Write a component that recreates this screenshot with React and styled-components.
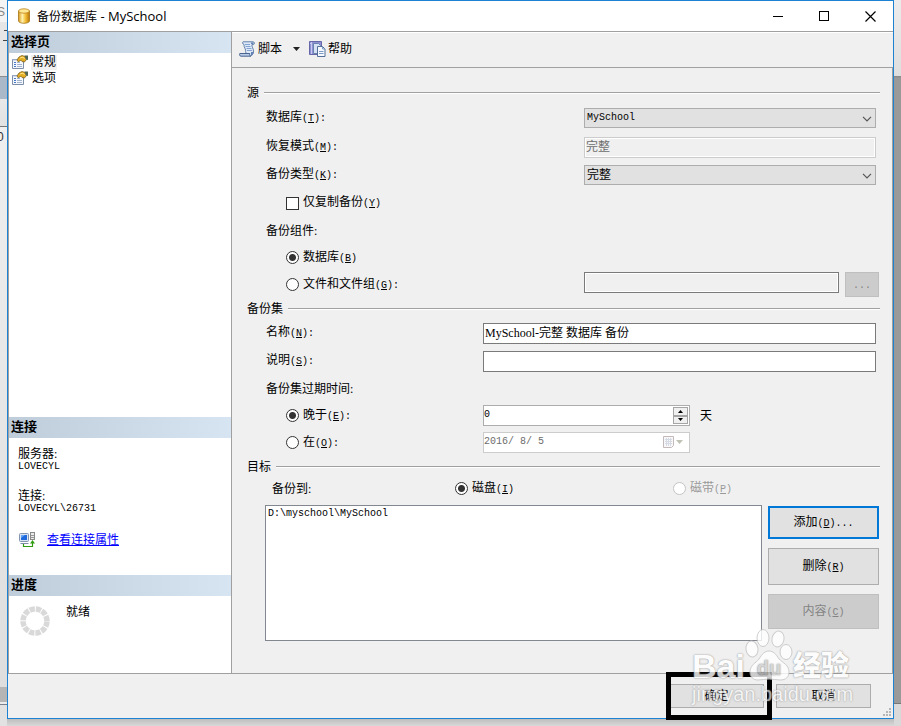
import React, { useState } from 'react'
import styled, { createGlobalStyle, css } from 'styled-components'

const GlobalStyle = createGlobalStyle`
  *, *::before, *::after {
    box-sizing: border-box;
  }
  body {
    margin: 0;
    background: #d6d6d6;
    color: #000;
    font-family: 'Liberation Serif', 'Noto Sans CJK SC', sans-serif;
    font-size: 12px;
    line-height: 16px;
  }
  button, input, select {
    font: inherit;
    color: inherit;
    margin: 0;
  }
`

const Key = ({ k, tail = '' }) => (
  <Latin>
    (<u>{k}</u>){tail}
  </Latin>
)

const App = () => {
  const [source, setSource] = useState('db')
  const [expire, setExpire] = useState('after')
  const [days, setDays] = useState('0')
  const [name, setName] = useState('MySchool-完整 数据库 备份')

  return (
    <Desktop>
      <GlobalStyle />
      <BehindLeft aria-hidden="true">
        <span>S</span>
        <span>0</span>
      </BehindLeft>
      <Window>
        <TitleBar>
          <DatabaseIcon />
          <Title>备份数据库<span> - MySchool</span></Title>
          <CaptionButton aria-label="最小化">
            <svg width="11" height="11" shapeRendering="crispEdges"><path d="M0 5.5h10" stroke="#000" /></svg>
          </CaptionButton>
          <CaptionButton aria-label="最大化">
            <svg width="11" height="11" shapeRendering="crispEdges"><path d="M.5 .5h9v9h-9z" fill="none" stroke="#000" /></svg>
          </CaptionButton>
          <CaptionButton aria-label="关闭">
            <svg width="11" height="11"><path d="M.5 .5l10 10M10.500 .5l-10 10" stroke="#000" strokeWidth="1.200" /></svg>
          </CaptionButton>
        </TitleBar>

        <Body>
          <Sidebar>
            <SideHeading>选择页</SideHeading>
            <PageList>
              <PageItem type="button" $active>
                <PageIcon />
                <span>常规</span>
              </PageItem>
              <PageItem type="button">
                <PageIcon />
                <span>选项</span>
              </PageItem>
            </PageList>
            <SideHeading>连接</SideHeading>
            <Connection>
              <dt>服务器:</dt>
              <dd>LOVECYL</dd>
              <dt>连接:</dt>
              <dd>LOVECYL\26731</dd>
            </Connection>
            <ConnectionLink>
              <ServerIcon />
              <a href="#properties">查看连接属性</a>
            </ConnectionLink>
            <SideHeading>进度</SideHeading>
            <Progress>
              <SpinnerIcon />
              <span>就绪</span>
            </Progress>
          </Sidebar>

          <Main>
            <Toolbar>
              <ToolButton type="button">
                <ScriptIcon />
                脚本
                <svg width="7" height="4"><path d="M0 0h7L3.500 4z" fill="#222" /></svg>
              </ToolButton>
              <ToolButton type="button">
                <HelpIcon />
                帮助
              </ToolButton>
            </Toolbar>

            <Form>
              <Legend>源</Legend>
              <Row $height={30}>
                <label htmlFor="database">数据库<Key k="T" tail=":" /></label>
                <SelectBox>
                  <select id="database" className="latin"><option>MySchool</option></select>
                  <Chevron />
                </SelectBox>
              </Row>
              <Row>
                <label htmlFor="recovery">恢复模式<Key k="M" tail=":" /></label>
                <TextInput id="recovery" value="完整" $tone="pale" disabled readOnly />
              </Row>
              <Row>
                <label htmlFor="type">备份类型<Key k="K" tail=":" /></label>
                <SelectBox>
                  <select id="type"><option>完整</option></select>
                  <Chevron />
                </SelectBox>
              </Row>
              <Row>
                <Option>
                  <input type="checkbox" />
                  <span>仅复制备份<Key k="Y" /></span>
                </Option>
              </Row>
              <Row $height={27}>备份组件:</Row>
              <Row $height={27}>
                <Option>
                  <input type="radio" name="source" checked={source === 'db'} onChange={() => setSource('db')} />
                  <span>数据库<Key k="B" /></span>
                </Option>
              </Row>
              <Row $height={27} $wide>
                <Option>
                  <input type="radio" name="source" checked={source === 'files'} onChange={() => setSource('files')} />
                  <span>文件和文件组<Key k="G" tail=":" /></span>
                </Option>
                <FileField>
                  <TextInput aria-label="文件和文件组" $tone="dark" disabled />
                  <Button type="button" disabled><Latin>...</Latin></Button>
                </FileField>
              </Row>

              <Legend>备份集</Legend>
              <Row $label={217}>
                <label htmlFor="name">名称<Key k="N" tail=":" /></label>
                <TextInput id="name" value={name} onChange={(e) => setName(e.target.value)} />
              </Row>
              <Row $label={217}>
                <label htmlFor="desc">说明<Key k="S" tail=":" /></label>
                <TextInput id="desc" />
              </Row>
              <Row $height={27}>备份集过期时间:</Row>
              <Row $height={27} $label={217}>
                <Option>
                  <input type="radio" name="expire" checked={expire === 'after'} onChange={() => setExpire('after')} />
                  <span>晚于<Key k="E" tail=":" /></span>
                </Option>
                <DaysField>
                  <SpinBox>
                    <input aria-label="天数" value={days} onChange={(e) => setDays(e.target.value)} />
                    <Spinner>
                      <button type="button" aria-label="增加" onClick={() => setDays(String(Number(days) + 1))}>
                        <svg width="5" height="3"><path d="M2.500 0L5 3H0z" /></svg>
                      </button>
                      <button type="button" aria-label="减少" onClick={() => setDays(String(Math.max(0, Number(days) - 1)))}>
                        <svg width="5" height="3"><path d="M0 0h5L2.500 3z" /></svg>
                      </button>
                    </Spinner>
                  </SpinBox>
                  天
                </DaysField>
              </Row>
              <Row $height={27} $label={217}>
                <Option>
                  <input type="radio" name="expire" checked={expire === 'on'} onChange={() => setExpire('on')} />
                  <span>在<Key k="O" tail=":" /></span>
                </Option>
                <DateBox>
                  <input aria-label="日期" value="2016/ 8/ 5" disabled readOnly />
                  <CalendarIcon />
                </DateBox>
              </Row>

              <Legend>目标</Legend>
              <TargetRow>
                <span>备份到:</span>
                <Option>
                  <input type="radio" name="target" defaultChecked />
                  <span>磁盘<Key k="I" /></span>
                </Option>
                <Option>
                  <input type="radio" name="target" disabled />
                  <span>磁带<Key k="P" /></span>
                </Option>
              </TargetRow>
              <Target>
                <FileList>
                  <li>D:\myschool\MySchool</li>
                </FileList>
                <Actions>
                  <Button type="button" $primary $height={33}>添加<Key k="D" tail="..." /></Button>
                  <Button type="button" $height={37}>删除<Key k="R" /></Button>
                  <Button type="button" $height={35} disabled>内容<Key k="C" /></Button>
                </Actions>
              </Target>
            </Form>
          </Main>
        </Body>

        <Footer>
          <Highlight>
            <Button type="button" $height={24}>确定</Button>
          </Highlight>
          <Button type="button" $height={24}>取消</Button>
          <Grip />
        </Footer>
        <Watermark>
          <Brand>
            <span>Bai</span>
            <Paw />
            <b>经验</b>
          </Brand>
          <Site>jingyan.baidu.com</Site>
        </Watermark>
      </Window>
      <BehindRight />
    </Desktop>
  )
}

export default App

const DatabaseIcon = () => (
  <svg width="14" height="16" viewBox="0 0 14 16">
    <defs>
      <linearGradient id="gold">
        <stop offset="0" stopColor="#d99a1c" />
        <stop offset=".35" stopColor="#fff3b0" />
        <stop offset=".65" stopColor="#f2bd35" />
        <stop offset="1" stopColor="#b87708" />
      </linearGradient>
    </defs>
    <path d="M1.500 3v10c0 1.200 2.500 2.300 5.500 2.300s5.500-1.100 5.500-2.300V3z" fill="url(#gold)" stroke="#a87415" strokeWidth=".8" />
    <ellipse cx="7" cy="3" rx="5.500" ry="2.200" fill="#ffe793" stroke="#b98420" strokeWidth=".8" />
  </svg>
)

const PageIcon = () => (
  <svg width="16" height="14" viewBox="0 0 16 14">
    <path d="M.5 4.500h11v9H.5z" fill="#f4f7fc" stroke="#7d8ea8" />
    <path d="M1 5h10" stroke="#b6c4dc" />
    <path d="M2 7.500h2M2 9.500h2M2 11.500h2" stroke="#4a78c8" />
    <path d="M5 7.500h3M5 9.500h5M5 11.500h5" stroke="#a3b3cc" />
    <path d="M5 5l2-3 3-1.500 3 1 1.500 3-2 2.500-2.500-.5-1.500-1.500-2 2z" fill="#e3ad22" stroke="#80601c" strokeWidth=".8" />
    <path d="M8 3l3-1 1.500 2" fill="none" stroke="#ffe48a" />
    <path d="M12.500 .5H16v4.500l-2-.5z" fill="#4d6655" />
  </svg>
)

const ServerIcon = () => (
  <svg width="16" height="16" viewBox="0 0 16 16">
    <rect x=".5" y="1.500" width="9" height="8" rx="1" fill="#d9e4f3" stroke="#8394b2" />
    <rect x="2" y="3" width="6" height="5" fill="#1c68dc" />
    <path d="M2 3h4L2 6z" fill="#69a6f5" />
    <path d="M2 11h7l1 1H1z" fill="#7c8ba7" />
    <rect x="11.500" y=".5" width="4" height="7" fill="#ebebeb" stroke="#898989" />
    <path d="M12 3.500h3M12 5.500h3" stroke="#999" />
    <path d="M4.500 12v2.500h9v-4" fill="none" stroke="#2e9b10" strokeWidth="1.200" />
    <path d="M11 11.500l2.500-3.500 2.500 3.500z" fill="#2e9b10" />
  </svg>
)

const SpinnerIcon = () => (
  <svg width="30" height="30" viewBox="0 0 30 30">
    <circle cx="15" cy="15" r="12" fill="none" stroke="#d9d9d9" strokeWidth="5.500" strokeDasharray="5.283 1" strokeDashoffset="-.5" />
  </svg>
)

const ScriptIcon = () => (
  <svg width="17" height="16" viewBox="0 0 17 16">
    <path d="M4 .8h10c1.800 0 2 2.700.3 2.700H13c-.8 1.800 2 4.500 1.500 7.500-.3 2-1.500 3.500-3 4l-4-2-1-2.500c1-1.500-2-4.500-1.500-7C3.500 3 3 1.300 4 .8z" fill="#dce8f8" stroke="#6480aa" />
    <path d="M.8 12.500h10c-.5 1 0 2.200 1 2.700H2C.5 15.200.3 13.300.8 12.500z" fill="#b9cbe8" stroke="#49658f" />
    <path d="M6 3.500h5M6.500 5.500h5M7.500 7.500h5M8 9.500h5" stroke="#86a4d2" />
    <path d="M12 1.500h2.500v1.500H12zM12 11h2.500c0 2-1 3.500-2.500 4z" fill="#6482b4" />
  </svg>
)

const HelpIcon = () => (
  <svg width="17" height="16" viewBox="0 0 17 16">
    <path d="M.5 .5h12v13H.5z" fill="#8e90d2" stroke="#6567a9" />
    <path d="M2.500 1v12M1 2.500h2" stroke="#c8caf2" />
    <path d="M4.500 2.500h5l2 2v8h-7z" fill="#d7e3f5" stroke="#6a83af" />
    <path d="M8.500 5.500h5l2.500 2.500v7.500H8.500z" fill="#f6faff" stroke="#536f99" />
    <path d="M13.500 5.500V8H16M10 10.500h4.500M10 12.500h4.500" fill="none" stroke="#7d9bc7" />
  </svg>
)

const CalendarIcon = () => (
  <svg width="21" height="13" viewBox="0 0 21 13">
    <path d="M.5 .5h10v9l-2 2h-8z" fill="#f8f8fa" stroke="#c3b9b9" />
    <path d="M2 3.500h7M2 5.500h7M2 7.500h7M3.500 2v8M5.500 2v8M7.500 2v8" stroke="#d5dae3" />
    <path d="M13 4h7l-3.500 4z" fill="#bfc2b4" />
  </svg>
)

const ChevronSvg = ({ className }) => (
  <svg className={className} width="10" height="6" viewBox="0 0 10 6">
    <path d="M1 .8l4 4 4-4" fill="none" stroke="#555" strokeWidth="1.200" />
  </svg>
)

const GripSvg = ({ className }) => (
  <svg className={className} width="8" height="8" fill="#b5b5b5">
    <path d="M6 0h2v2H6zM3 3h2v2H3zM6 3h2v2H6zM0 6h2v2H0zM3 6h2v2H3zM6 6h2v2H6z" />
  </svg>
)

const Paw = () => (
  <svg width="48" height="54" viewBox="0 0 48 54">
    <g fill="#fff" stroke="#c4c4c4">
      <ellipse cx="7" cy="21" rx="6" ry="8" transform="rotate(-8 7 21)" />
      <ellipse cx="18" cy="10" rx="6" ry="8.500" />
      <ellipse cx="33" cy="11" rx="6" ry="8" transform="rotate(12 33 11)" />
      <ellipse cx="41" cy="24" rx="6" ry="7.500" />
      <path d="M24 23c-4 0-7 3-10 8-3 4-9 6-9 13 0 5 3 8 8 8 4 0 7-1 11-1s7 1 11 1c6 0 9-3 9-8 0-7-6-9-10-13-3-5-6-8-10-8z" />
    </g>
    <text x="24" y="47" textAnchor="middle" fontFamily="Liberation Sans" fontWeight="700" fontSize="20" fill="#d0d0d0">du</text>
  </svg>
)

const Latin = styled.span`
  font-family: 'Liberation Mono', monospace;
  font-size: 10px;
`

const Desktop = styled.div`
  display: grid;
  grid-template-columns: 7px 1fr 7px;
  min-height: 100vh;
  padding-bottom: 7px;
  background: linear-gradient(to top, #d9d9d9, #bdbdbd 7px);
`

const BehindLeft = styled.div`
  overflow: hidden;
  padding-top: 4px;
  margin-bottom: -7px;
  color: #888;
  background: linear-gradient(#444, #444) 4px 30px / 3px 1px no-repeat,
    linear-gradient(#444, #444) 3px 40px / 4px 1px no-repeat,
    linear-gradient(
      #f4f4f4 22px, #e6e6e6 22px, #e6e6e6 76px, #8c8c8c 76px, #8c8c8c 77px,
      #aab8c7 77px, #aab8c7 99px, #e9e9e9 99px, #e2e2e2 126px, #777 126px, #777 127px,
      #efefef 127px, #dedede 687px, #b5b5b5 687px, #b5b5b5 702px, #ececec 702px,
      #ececec 704px, #777f8c 704px, #777f8c 705px, #e2e2e2 705px
    );

  span {
    display: block;
    margin-left: -3px;
    font-family: 'Liberation Sans', sans-serif;
  }
  span + span {
    margin-top: 109px;
    color: #333;
  }
`

const BehindRight = styled.div`
  margin-bottom: -7px;
  background: linear-gradient(
    #ececec, #dedede 76px, #858585 76px, #999 78px, #999 703px, #777 703px, #777 704px, #d9d9d9 704px
  );
`

const Window = styled.div`
  position: relative;
  display: flex;
  flex-direction: column;
  background: #f0f0f0;
  border: 1px solid #1e82d2;
`

const TitleBar = styled.header`
  display: flex;
  align-items: center;
  height: 31px;
  padding-left: 9px;
  background: #fff;
  border-bottom: 1px solid #a0a0a0;
`

const Title = styled.h1`
  flex: 1;
  margin: 0 0 0 6px;
  font-family: 'Open Sans', 'Noto Sans CJK SC', sans-serif;
  font-size: 12px;
  font-weight: 400;

  span {
    font-size: 13px;
  }
`

const CaptionButton = styled.button`
  display: grid;
  place-items: center;
  width: 46px;
  height: 30px;
  padding: 0;
  border: 0;
  background: none;
`

const Body = styled.div`
  display: grid;
  grid-template-columns: 224px 1fr;
  flex: 1;
  border-bottom: 1px solid #a0a0a0;
`

const Sidebar = styled.aside`
  display: flex;
  flex-direction: column;
  background: #fff;
  border: solid #a0a0a0;
  border-width: 0 1px;
`

const SideHeading = styled.h2`
  height: 21px;
  margin: 0;
  padding-left: 2px;
  font-size: 13px;
  font-weight: 700;
  line-height: 20px;
  background: linear-gradient(to right, #bfcddb, #d7e4f2);
`

const PageList = styled.nav`
  flex: 1;
  padding-top: 1px;
`

const PageItem = styled.button`
  display: flex;
  align-items: center;
  gap: 3px;
  height: 16px;
  padding: 0 0 0 3px;
  border: 0;
  background: none;

  span {
    padding: 0 1px;
    line-height: 15px;
    background: ${({ $active }) => ($active ? '#f0f0f0' : 'none')};
  }
`

const Connection = styled.dl`
  margin: 0;
  padding: 10px 0 0 9px;

  dt {
    line-height: 13px;
  }
  dd {
    margin: 0 0 17px;
    font-family: 'Liberation Mono', monospace;
    font-size: 10px;
    line-height: 12px;
  }
`

const ConnectionLink = styled.div`
  display: flex;
  align-items: flex-start;
  gap: 12px;
  height: 43px;
  padding-left: 10px;

  a {
    color: #00f;
  }
`

const Progress = styled.div`
  display: flex;
  align-items: flex-start;
  gap: 16px;
  height: 77px;
  padding: 8px 0 0 11px;

  svg {
    margin-top: 2px;
  }
`

const Main = styled.main`
  border-top: 1px solid #fff;
`

const Toolbar = styled.div`
  display: flex;
  align-items: center;
  gap: 9px;
  height: 35px;
  padding: 0 0 2px 7px;
  border-bottom: 1px solid #a0a0a0;
`

const ToolButton = styled.button`
  display: flex;
  align-items: center;
  gap: 2px;
  padding: 0;
  border: 0;
  background: none;

  svg:last-child:not(:first-child) {
    margin-left: 9px;
  }
`

const Form = styled.form`
  padding: 14px 12px 32px 15px;
  border-right: 1px solid #a0a0a0;
`

const Legend = styled.h3`
  display: flex;
  align-items: center;
  gap: 5px;
  height: 21px;
  margin: 0;
  font-size: 12px;
  font-weight: 400;

  &::after {
    content: '';
    flex: 1;
    height: 2px;
    background: linear-gradient(#a0a0a0 50%, #fff 50%);
  }
`

const Row = styled.div`
  display: grid;
  grid-template-columns: ${({ $label = 318 }) => $label}px 1fr;
  align-items: center;
  height: ${({ $height = 28 }) => $height}px;
  padding: 0 ${({ $wide }) => ($wide ? 1 : 4)}px 0 19px;
`

const Option = styled.label`
  display: flex;
  align-items: center;
  gap: 4px;

  ${Row} & {
    padding-left: 20px;
  }

  input {
    appearance: none;
    flex: none;
    width: 13px;
    height: 13px;
    background: #fff;
    border: 1px solid #333;
  }
  input[type='radio'] {
    border-radius: 50%;
  }
  input[type='radio']:checked {
    background: radial-gradient(circle, #333 3px, #fff 4px);
  }
  input:checked[type='checkbox'] {
    box-shadow: inset 0 0 0 3px #fff;
    background: #333;
  }
  input:disabled {
    border-color: #c4c4c4;
  }
  input:disabled + span {
    color: #9a9a9a;
  }
`

const tones = {
  normal: css`
    background: #fff;
    border: 1px solid #7a7a7a;
  `,
  pale: css`
    color: #6d6d6d;
    background: #f0f0f0;
    border: 1px solid #ccc;
    box-shadow: inset 0 0 0 1px #fff;
  `,
  dark: css`
    background: #f0f0f0;
    border: 1px solid #7a7a7a;
    box-shadow: inset 0 0 0 1px #fff;
  `,
}

const TextInput = styled.input`
  width: 100%;
  min-width: 0;
  height: 21px;
  padding: 0 1px 2px;
  ${({ $tone = 'normal' }) => tones[$tone]}
`

const SelectBox = styled.div`
  position: relative;

  select {
    display: block;
    appearance: none;
    width: 100%;
    height: 20px;
    padding: 0 20px 0 2px;
    line-height: 18px;
    background: #e1e1e1;
    border: 1px solid #adadad;
    border-radius: 0;
  }
  .latin {
    font-family: 'Liberation Mono', monospace;
    font-size: 10px;
  }
`

const Chevron = styled(ChevronSvg)`
  position: absolute;
  top: 8px;
  right: 4px;
  pointer-events: none;
`

const FileField = styled.div`
  display: flex;
  align-items: flex-start;
  gap: 6px;
`

const Button = styled.button`
  height: ${({ $height = 25 }) => $height}px;
  padding: 0;
  background: #e1e1e1;
  border: 1px solid #adadad;

  &:disabled {
    color: #838383;
    background: #ccc;
    border-color: #bfbfbf;
  }
  ${({ $primary }) => $primary && css`
    border: 2px solid #0078d7;
  `}
  ${FileField} & {
    flex: 0 0 34px;
  }
`

const DaysField = styled.div`
  display: flex;
  align-items: center;
  gap: 10px;
`

const fieldBox = css`
  display: flex;
  align-items: center;
  width: 207px;
  height: 21px;
  background: #fff;

  input {
    flex: 1;
    min-width: 0;
    height: 100%;
    padding: 0 0 2px;
    border: 0;
    background: none;
    font-family: 'Liberation Mono', monospace;
    font-size: 10px;
  }
`

const SpinBox = styled.div`
  ${fieldBox}
  border: 1px solid #adadad;
`

const Spinner = styled.div`
  display: flex;
  flex-direction: column;
  width: 15px;
  height: 17px;
  margin-right: 1px;

  button {
    flex: 1;
    display: grid;
    place-items: center;
    min-height: 0;
    padding: 0;
    background: #f0f0f0;
    border: 1px solid #a5a5a5;
  }
`

const DateBox = styled.div`
  ${fieldBox}
  padding-right: 5px;
  color: #6d6d6d;
  border: 1px solid #ccc;
`

const TargetRow = styled.div`
  display: grid;
  grid-template-columns: 183px 218px 1fr;
  align-items: center;
  height: 23px;
  padding-left: 25px;
`

const Target = styled.div`
  display: grid;
  grid-template-columns: 1fr 111px;
  gap: 6px;
  padding: 5px 1px 0 18px;
`

const FileList = styled.ul`
  min-height: 136px;
  margin: 0;
  padding: 0 2px;
  list-style: none;
  font-family: 'Liberation Mono', monospace;
  font-size: 10px;
  background: #fff;
  border: 1px solid #828790;
`

const Actions = styled.div`
  display: flex;
  flex-direction: column;
  gap: 9px;
  padding-top: 1px;
`

const Footer = styled.footer`
  position: relative;
  display: flex;
  justify-content: flex-end;
  gap: 12px;
  height: 44px;
  padding: 10px 22px 0 0;

  button {
    width: 95px;
  }
`

const Highlight = styled.div`
  position: relative;

  &::after {
    content: '';
    position: absolute;
    top: -12px;
    left: -3px;
    right: -8px;
    height: 48px;
    border: 5px solid #000;
    pointer-events: none;
  }
`

const Grip = styled(GripSvg)`
  position: absolute;
  right: 2px;
  bottom: 2px;
`

const Watermark = styled.div`
  position: absolute;
  right: 41px;
  bottom: 12px;
  width: 160px;
  color: #fff;
  opacity: 0.8;
  font-family: 'Liberation Sans', 'Noto Sans CJK SC', sans-serif;
  text-shadow: 0 0 2px #888, 0 0 1px #aaa;
  pointer-events: none;
`

const Brand = styled.div`
  display: flex;
  align-items: flex-end;
  height: 52px;
  font-size: 34px;
  font-weight: 700;
  line-height: 32px;

  b {
    font-size: 28px;
    line-height: 30px;
  }
`

const Site = styled.div`
  font-size: 20px;
  line-height: 24px;
  white-space: nowrap;
  opacity: 0.8;
`
